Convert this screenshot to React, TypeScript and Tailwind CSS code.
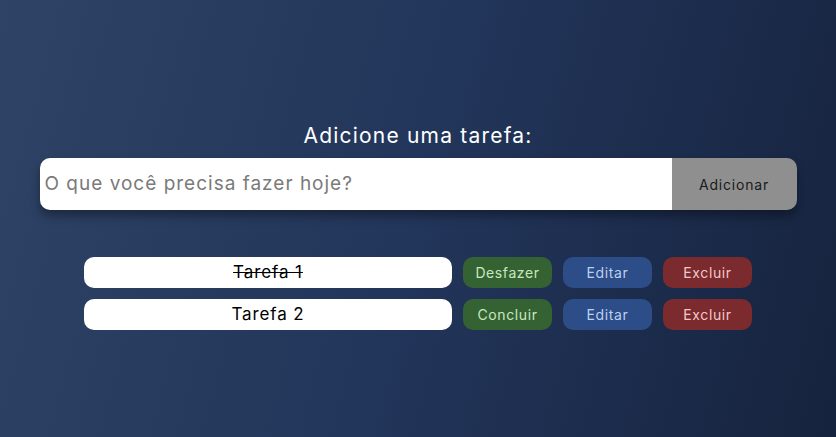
import React from 'react';

type Task = { id: number; text: string; done: boolean };

const tasks: Task[] = [
  { id: 1, text: 'Tarefa 1', done: true },
  { id: 2, text: 'Tarefa 2', done: false },
];

export default function App() {
  return (
    <div
      className="min-h-screen w-full bg-[linear-gradient(105deg,#2e4365_0%,#22355a_50%,#16233e_100%)] pt-[121px]"
      style={{ fontFamily: 'Inter, "Open Sans", sans-serif' }}
    >
      {/* Add task */}
      <div className="flex flex-col items-center">
        <h1 className="text-[21px] leading-[29px] text-white tracking-[1.2px]">Adicione uma tarefa:</h1>
        <div className="mt-2 flex w-[757px] h-[52px] rounded-[10px] overflow-hidden shadow-[0_6px_10px_rgba(0,0,0,0.35)]">
          <input
            className="flex-1 bg-white px-[5px] text-[19px] tracking-[1px] text-gray-800 placeholder:text-[#7a7a7a] outline-none"
            placeholder="O que você precisa fazer hoje?"
          />
          <button className="w-[125px] bg-[#8f8f8f] text-[14px] tracking-[0.8px] text-[#1a1a1a]">Adicionar</button>
        </div>
      </div>

      {/* Task list */}
      <div className="mt-[47px] flex flex-col items-center gap-[11px]">
        {tasks.map((task) => (
          <div key={task.id} className="flex items-center gap-[11px]">
            <div className="w-[368px] h-[31px] rounded-[10px] bg-white flex items-center justify-center text-[17px] tracking-[0.9px] text-black">
              <span className={task.done ? 'line-through' : ''}>{task.text}</span>
            </div>
            <button className="w-[89px] h-[31px] rounded-[10px] bg-[#346233] text-[14px] tracking-[0.6px] text-[#c8e8bd]">
              {task.done ? 'Desfazer' : 'Concluir'}
            </button>
            <button className="w-[89px] h-[31px] rounded-[10px] bg-[#2c4d88] text-[14px] tracking-[0.6px] text-[#bcd0f0]">
              Editar
            </button>
            <button className="w-[89px] h-[31px] rounded-[10px] bg-[#7b2a2d] text-[14px] tracking-[0.6px] text-[#f2c9c9]">
              Excluir
            </button>
          </div>
        ))}
      </div>
    </div>
  );
}
